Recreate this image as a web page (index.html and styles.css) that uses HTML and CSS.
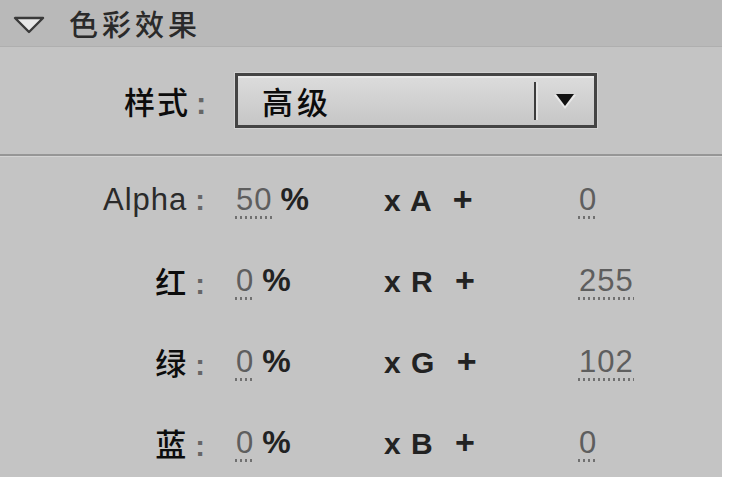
FILE: index.html
```html
<!DOCTYPE html>
<html lang="zh-CN">
<head>
    <meta charset="UTF-8">
    <title>色彩效果</title>
    <link rel="stylesheet" href="styles.css">
</head>
<body>
    <div class="panel">
        <div class="panel-header">
            <svg class="twisty" width="32" height="18" viewBox="0 0 32 18">
                <polygon points="2,2 30,2 16,16" fill="#e8e8e8" stroke="#3a3a3a" stroke-width="2.4" stroke-linejoin="round"/>
            </svg>
            <span class="panel-title">色彩效果</span>
        </div>
        <div class="style-row">
            <span class="style-label">样式<span class="colon">:</span></span>
            <div class="select">
                <span class="select-text">高级</span>
                <span class="select-split"></span>
                <svg class="select-arrow" width="26" height="18" viewBox="0 0 26 18">
                    <polygon points="2,2 24,2 13,16" fill="#ededed" opacity="0.8"/>
                    <polygon points="4,1 22,1 13,13" fill="#111"/>
                </svg>
            </div>
        </div>
        <div class="channels">
            <span class="ch-label">Alpha<span class="colon">:</span></span>
            <span class="ch-mult"><span class="num">50</span><span class="pct">%</span></span>
            <span class="ch-op">x A <span class="plus">+</span></span>
            <span class="ch-offset"><span class="num">0</span></span>

            <span class="ch-label cjk">红<span class="colon">:</span></span>
            <span class="ch-mult"><span class="num">0</span><span class="pct">%</span></span>
            <span class="ch-op">x R <span class="plus">+</span></span>
            <span class="ch-offset"><span class="num">255</span></span>

            <span class="ch-label cjk">绿<span class="colon">:</span></span>
            <span class="ch-mult"><span class="num">0</span><span class="pct">%</span></span>
            <span class="ch-op">x G <span class="plus">+</span></span>
            <span class="ch-offset"><span class="num">102</span></span>

            <span class="ch-label cjk">蓝<span class="colon">:</span></span>
            <span class="ch-mult"><span class="num">0</span><span class="pct">%</span></span>
            <span class="ch-op">x B <span class="plus">+</span></span>
            <span class="ch-offset"><span class="num">0</span></span>
        </div>
    </div>
</body>
</html>
```

FILE: styles.css
```css
body {
    margin: 0;
    padding: 0;
    background-color: #fff;
    font-family: "Liberation Sans", "Noto Sans CJK SC", sans-serif;
    color: #1a1a1a;
}
.panel {
    width: 722px;
    height: 477px;
    background-color: #c4c4c4;
    overflow: hidden;
}
.panel-header {
    height: 46px;
    display: flex;
    align-items: center;
    padding-left: 13px;
    background-color: #b9b9b9;
    border-bottom: 1px solid #afafaf;
}
.twisty {
    margin-top: 4px;
}
.panel-title {
    margin-left: 24px;
    font-size: 29px;
    font-weight: 500;
    letter-spacing: 4px;
    color: #2a2a2a;
}
.style-row {
    height: 107px;
    display: flex;
    align-items: center;
    padding-left: 124px;
}
.style-label {
    font-size: 31px;
    font-weight: 500;
    letter-spacing: 2px;
    color: #0c0c0c;
    width: 111px;
}
.colon {
    color: #666;
    margin-left: 6px;
    font-family: "Liberation Sans", sans-serif;
    font-weight: bold;
}
.select {
    width: 356px;
    height: 49px;
    border: 3px solid #444;
    background: linear-gradient(#dcdcdc, #c6c6c6);
    box-shadow: inset 0 2px 0 #e8e8e8, 0 0 0 1px #d2d2d2;
    display: flex;
    align-items: center;
}
.select-text {
    flex: 1;
    padding-left: 24px;
    font-size: 31px;
    font-weight: 500;
    letter-spacing: 4px;
    color: #0c0c0c;
}
.select-split {
    width: 2px;
    height: 38px;
    background-color: #3c3c3c;
    border-right: 2px solid #e4e4e4;
}
.select-arrow {
    margin: 2px 16px 0 14px;
}
.channels {
    border-top: 2px solid #969696;
    box-shadow: inset 0 1px 0 #d4d4d4;
    padding-top: 3px;
    display: grid;
    grid-template-columns: 206px 178px 194px 1fr;
    grid-auto-rows: 81px;
    align-items: center;
    font-size: 31px;
}
.ch-label {
    text-align: right;
    color: #2a2a2a;
    letter-spacing: 1px;
}
.ch-label.cjk {
    font-size: 31px;
    font-weight: 500;
    color: #0c0c0c;
}
.ch-label .colon {
    font-size: 29px;
    margin-left: 8px;
}
.ch-mult {
    padding-left: 29px;
}
.num {
    color: #5e5e5e;
    letter-spacing: 1px;
    padding: 0 0 2px 1px;
    background-image: linear-gradient(90deg, #707070 50%, transparent 50%);
    background-size: 5px 3px;
    background-repeat: repeat-x;
    background-position: left bottom;
}
.pct {
    margin-left: 8px;
    font-size: 32px;
    font-weight: bold;
    color: #222;
}
.ch-op {
    font-size: 30px;
    font-weight: bold;
    color: #222;
    word-spacing: 2px;
}
.plus {
    margin-left: 12px;
    font-size: 34px;
    font-weight: bold;
}
```
